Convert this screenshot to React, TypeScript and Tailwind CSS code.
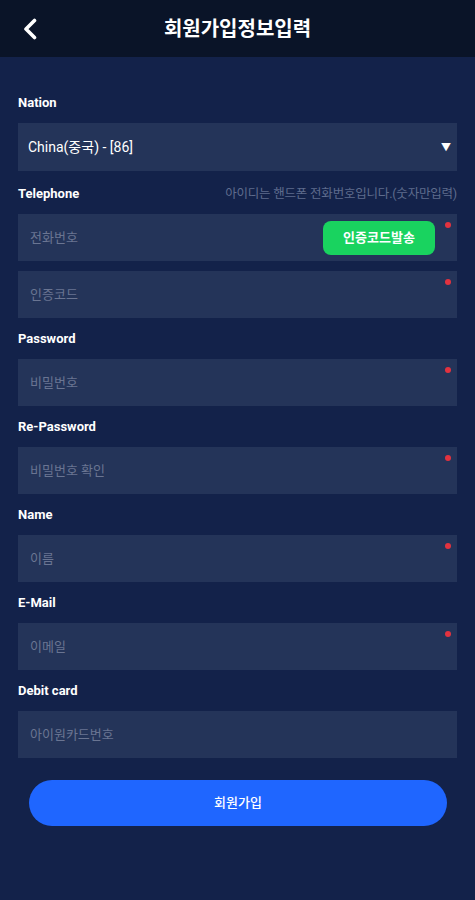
const font = "font-['Roboto','Noto_Sans_CJK_KR',sans-serif]";

type Field = {
  label: string;
  hint?: string;
  inputs: { placeholder: string; required?: boolean; action?: string }[];
};

const fields: Field[] = [
  {
    label: "Telephone",
    hint: "아이디는 핸드폰 전화번호입니다.(숫자만입력)",
    inputs: [
      { placeholder: "전화번호", required: true, action: "인증코드발송" },
      { placeholder: "인증코드", required: true },
    ],
  },
  { label: "Password", inputs: [{ placeholder: "비밀번호", required: true }] },
  { label: "Re-Password", inputs: [{ placeholder: "비밀번호 확인", required: true }] },
  { label: "Name", inputs: [{ placeholder: "이름", required: true }] },
  { label: "E-Mail", inputs: [{ placeholder: "이메일", required: true }] },
  { label: "Debit card", inputs: [{ placeholder: "아이원카드번호" }] },
];

function Label({ text, hint }: { text: string; hint?: string }) {
  return (
    <div className="mb-[10px] flex h-5 items-center justify-between">
      <span className="text-[13px] font-bold text-white">{text}</span>
      {hint && <span className="text-[12.5px] tracking-[-0.2px] text-[#5f6c8d]">{hint}</span>}
    </div>
  );
}

function Input({ placeholder, required, action }: { placeholder: string; required?: boolean; action?: string }) {
  return (
    <div className="relative flex h-[47px] items-center bg-[#243459] pl-3 pr-[22px]">
      <span className="flex-1 text-[13px] text-[#6a7592]">{placeholder}</span>
      {action && (
        <button className="h-[34px] w-[112px] rounded-lg bg-[#19d35f] text-[13px] font-bold text-white">
          {action}
        </button>
      )}
      {required && <span className="absolute right-[6px] top-[8px] h-[6px] w-[6px] rounded-full bg-[#e2323f]" />}
    </div>
  );
}

export default function App() {
  return (
    <div className={`${font} min-h-[900px] w-[475px] bg-[#13224a]`}>
      <header className="relative flex h-[57px] items-center justify-center bg-[#0a1428]">
        <svg className="absolute left-[22px] top-[18px]" width="16" height="22" viewBox="0 0 16 22" fill="none">
          <path d="M12.5 2.5 4 11l8.5 8.5" stroke="white" strokeWidth="3.6" strokeLinecap="round" strokeLinejoin="round" />
        </svg>
        <h1 className="text-[20px] font-bold text-white">회원가입정보입력</h1>
      </header>

      <main className="px-[18px] pt-[36px]">
        <Label text="Nation" />
        <div className="flex h-[48px] items-center justify-between bg-[#243459] pl-[10px] pr-[6px]">
          <span className="text-[14px] text-white">China(중국) - [86]</span>
          <span className="text-[10px] text-white">▼</span>
        </div>

        {fields.map((field, i) => (
          <div key={field.label} className={i === 0 ? "mt-[13px]" : "mt-[11px]"}>
            <Label text={field.label} hint={field.hint} />
            <div className="flex flex-col gap-[10px]">
              {field.inputs.map((input) => (
                <Input key={input.placeholder} {...input} />
              ))}
            </div>
          </div>
        ))}

        <button className="mx-[11px] mt-[22px] h-[46px] w-[418px] rounded-full bg-[#1f66ff] text-[13px] font-medium text-white">
          회원가입
        </button>
      </main>
    </div>
  );
}
